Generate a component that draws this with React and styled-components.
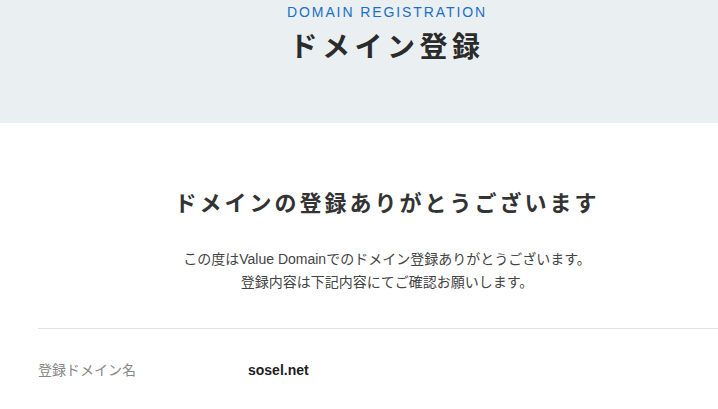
import React from "react";
import styled, { createGlobalStyle } from "styled-components";

const Global = createGlobalStyle`
  html, body { margin: 0; padding: 0; background: #fff; overflow: hidden; }
  body { font-family: "Liberation Sans", "Noto Sans CJK JP", sans-serif; color: #333; }
`;

const Hero = styled.header`
  background: #eaeff2;
  height: 123px;
  display: flex;
  flex-direction: column;
  align-items: center;
  padding-left: 56px;
  box-sizing: border-box;
`;

const Eyebrow = styled.div`
  font-size: 14px;
  letter-spacing: 1.9px;
  color: #1a6fc4;
  line-height: 16px;
  margin-top: 4px;
`;

const HeroTitle = styled.h1`
  margin: 12px 0 0;
  font-size: 28px;
  font-weight: 700;
  letter-spacing: 4.5px;
  line-height: 32px;
  color: #2b2b2b;
`;

const Main = styled.main`
  width: 698px;
  margin-left: 38px;
`;

const Thanks = styled.section`
  display: flex;
  flex-direction: column;
  align-items: center;
  padding-top: 65px;
  padding-bottom: 34px;
  border-bottom: 1px solid #e3e3e3;
`;

const Heading = styled.h2`
  margin: 0;
  font-size: 22px;
  font-weight: 700;
  letter-spacing: 3px;
  line-height: 32px;
  color: #333;
`;

const Lead = styled.p`
  margin: 28px 0 0;
  font-size: 14px;
  line-height: 23px;
  color: #444;
  text-align: center;
`;

const Row = styled.div`
  display: grid;
  grid-template-columns: 210px 1fr;
  align-items: center;
  padding-top: 31px;
  font-size: 14px;
  line-height: 20px;
`;

const Label = styled.div`
  color: #888;
`;

const Value = styled.div`
  color: #222;
  font-weight: 700;
`;

export default function App() {
  return (
    <>
      <Global />
      <Hero>
        <Eyebrow>DOMAIN REGISTRATION</Eyebrow>
        <HeroTitle>ドメイン登録</HeroTitle>
      </Hero>
      <Main>
        <Thanks>
          <Heading>ドメインの登録ありがとうございます</Heading>
          <Lead>
            この度はValue Domainでのドメイン登録ありがとうございます。
            <br />
            登録内容は下記内容にてご確認お願いします。
          </Lead>
        </Thanks>
        <Row>
          <Label>登録ドメイン名</Label>
          <Value>sosel.net</Value>
        </Row>
      </Main>
    </>
  );
}
